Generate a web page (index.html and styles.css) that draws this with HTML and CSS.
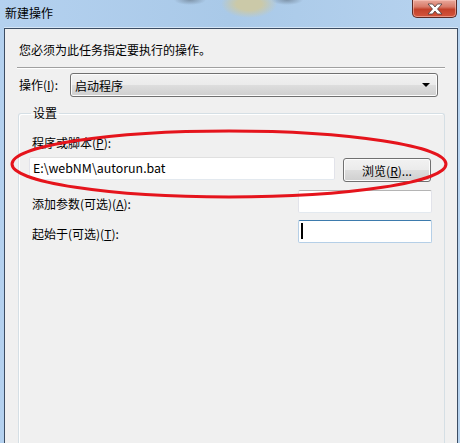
FILE: index.html
```html
<!DOCTYPE html>
<html lang="zh-CN">
<head>
  <meta charset="UTF-8">
  <title>新建操作</title>
  <link rel="stylesheet" href="styles.css">
</head>
<body>
  <div class="frame">
    <div class="titlebar">
      <span class="title">新建操作</span>
      <div class="close-btn">
        <svg width="18" height="12" viewBox="0 0 18 12">
          <path d="M2 1 L6.5 1 L9 4 L11.5 1 L16 1 L11.5 6 L16 11 L11.5 11 L9 8 L6.5 11 L2 11 L6.5 6 Z" fill="#fff" stroke="#4a3a3a" stroke-width="0.8"/>
        </svg>
      </div>
    </div>

    <div class="client">
      <div class="intro">您必须为此任务指定要执行的操作。</div>
      <div class="separator"></div>

      <div class="action-row">
        <span class="action-label">操作(<u>I</u>):</span>
        <div class="combo">
          <span>启动程序</span>
          <span class="combo-arrow"></span>
        </div>
      </div>

      <fieldset class="group">
        <legend>设置</legend>

        <div class="field-label">程序或脚本(<u>P</u>):</div>
        <div class="program-row">
          <div class="textbox program-box">E:\webNM\autorun.bat</div>
          <div class="button">浏览(<u>R</u>)...</div>
        </div>

        <div class="option-row">
          <span class="field-label">添加参数(可选)(<u>A</u>):</span>
          <div class="textbox small-box"></div>
        </div>

        <div class="option-row">
          <span class="field-label">起始于(可选)(<u>T</u>):</span>
          <div class="textbox small-box focused"><span class="caret"></span></div>
        </div>
      </fieldset>
    </div>

    <!-- red mark drawn over the screenshot -->
    <svg class="annotation" width="460" height="443" viewBox="0 0 460 443">
      <ellipse cx="229" cy="164" rx="217" ry="33" fill="none" stroke="#e5141c" stroke-width="3"/>
    </svg>
  </div>
</body>
</html>
```

FILE: styles.css
```css
body {
  margin: 0;
  width: 460px;
  height: 443px;
  overflow: hidden;
  font-family: 'Noto Sans CJK SC', 'Noto Sans', sans-serif;
  font-size: 12px;
  color: #000;
}
.frame {
  position: relative;
  height: 443px;
  display: flex;
  flex-direction: column;
  padding: 0 2px 0 4px;
  background:
    radial-gradient(ellipse 28px 14px at 249px 4px, #cbc9a8 0%, #cbc9a8 45%, rgba(203, 201, 168, 0) 100%),
    radial-gradient(ellipse 16px 5px at 190px 0px, #7f95ab 0%, rgba(127, 149, 171, 0) 100%),
    radial-gradient(ellipse 16px 5px at 287px 0px, #7f95ab 0%, rgba(127, 149, 171, 0) 100%),
    linear-gradient(to right, #b4d1ef, #a9c9e8 50%, #b7d3ef);
}
.titlebar {
  height: 28px;
  display: flex;
  align-items: flex-start;
  box-shadow: inset 0 -1px 0 #d6e6f6;
}
.title {
  margin: 5px 0 0 1px;
  line-height: 16px;
}
.close-btn {
  margin-left: auto;
  margin-right: 1px;
  width: 45px;
  height: 18px;
  box-sizing: border-box;
  border: 1px solid #5a2a26;
  border-top: none;
  border-radius: 0 0 5px 5px;
  background: linear-gradient(to bottom, #e9a99c 0%, #d87a68 40%, #c3412a 55%, #d4553c 100%);
  box-shadow: inset 0 0 0 1px rgba(255, 210, 200, 0.5);
  display: flex;
  align-items: center;
  justify-content: center;
}
.client {
  flex: 1;
  display: flex;
  flex-direction: column;
  background: #f0f0f0;
  border: 1px solid #3c4d63;
  border-bottom: none;
  padding: 0 12px 0 12px;
}
.intro {
  margin: 13px 0 0 2px;
  line-height: 16px;
}
.separator {
  margin-top: 9px;
  border-top: 1px solid #a0a0a0;
  border-bottom: 1px solid #fff;
}
.action-row {
  display: flex;
  align-items: center;
  margin: 4px 7px 0 2px;
}
.action-label {
  width: 51px;
  line-height: 16px;
}
.combo {
  flex: 1;
  height: 24px;
  box-sizing: border-box;
  display: flex;
  align-items: center;
  padding: 0 7px 0 4px;
  border: 1px solid #707070;
  border-radius: 3px;
  background: linear-gradient(to bottom, #f2f2f2 0%, #ebebeb 48%, #dddddd 52%, #cfcfcf 100%);
  box-shadow: inset 0 0 0 1px #fcfcfc;
}
.combo-arrow {
  margin-left: auto;
  width: 0;
  height: 0;
  border-left: 4px solid transparent;
  border-right: 4px solid transparent;
  border-top: 4px solid #000;
}
.group {
  flex: 1;
  margin: 8px 0 0 1px;
  padding: 14px 12px 0 10px;
  border: 1px solid #d5dfe5;
  border-bottom: none;
  border-radius: 3px 3px 0 0;
  box-shadow: inset 1px 1px 0 #fff;
}
.group legend {
  margin-left: 2px;
  padding: 0 2px;
  line-height: 16px;
}
.field-label {
  padding-left: 3px;
  line-height: 16px;
}
.program-row {
  display: flex;
  align-items: flex-start;
  margin-top: 6px;
}
.textbox {
  box-sizing: border-box;
  background: #fff;
  border: 1px solid #e2e3ea;
  border-top-color: #b4b4b4;
  border-bottom-color: #e3e9ef;
  border-radius: 2px;
}
.program-box {
  width: 306px;
  height: 23px;
  padding: 0 3px;
  line-height: 21px;
  font-size: 12.4px;
  border-top-color: #e0e0e0;
}
.button {
  margin: 1px 0 0 8px;
  width: 88px;
  height: 24px;
  box-sizing: border-box;
  display: flex;
  align-items: center;
  justify-content: center;
  border: 1px solid #707070;
  border-radius: 3px;
  background: linear-gradient(to bottom, #f2f2f2 0%, #ebebeb 48%, #dddddd 52%, #cfcfcf 100%);
  box-shadow: inset 0 0 0 1px #fcfcfc;
}
.option-row {
  display: flex;
  justify-content: space-between;
  align-items: flex-start;
  margin-top: 8px;
}
.option-row .field-label {
  padding-top: 6px;
}
.option-row + .option-row {
  margin-top: 7px;
}
.small-box {
  width: 134px;
  height: 23px;
  padding: 2px 2px;
}
.focused {
  border-color: #b5cfe7;
  border-top-color: #3d7bad;
}
.caret {
  display: block;
  width: 2px;
  height: 16px;
  background: #000;
}
.annotation {
  position: absolute;
  left: 0;
  top: 0;
  pointer-events: none;
}
```
